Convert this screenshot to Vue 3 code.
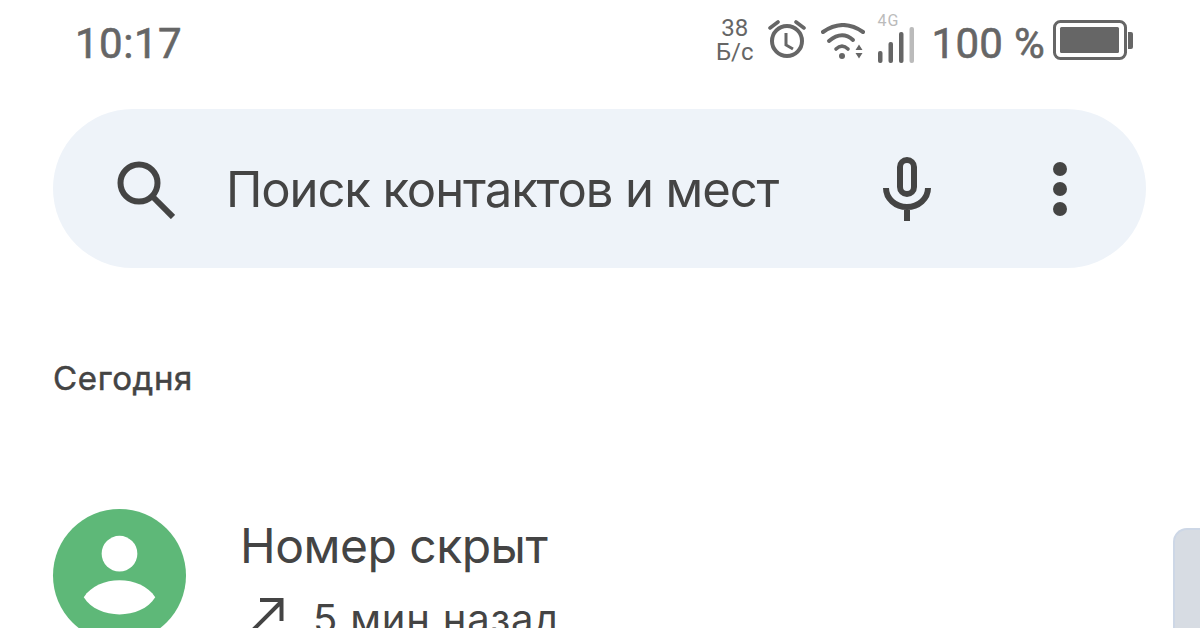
<template>
  <div class="screen">
    <header class="status-bar">
      <span class="clock">10:17</span>
      <div class="status-icons">
        <div class="speed"><span>38</span><span>Б/с</span></div>
        <svg class="ic-alarm" width="38" height="38" viewBox="0 0 38 38" fill="none" stroke="#666">
          <circle cx="19" cy="21" r="15" stroke-width="4" />
          <path d="M18 13v12l7 4" stroke-width="3" />
          <path d="M2 8l8-6M36 8l-8-6" stroke-linecap="round" stroke-width="3.600" />
        </svg>
        <svg class="ic-wifi" width="44" height="36" viewBox="0 0 44 36" fill="none" stroke="#666" stroke-linecap="round">
          <path d="M2 9Q22-5 42 9" stroke-width="4" />
          <path d="M8 18Q21 7 32 17" stroke-width="4" />
          <path d="M15 26Q21 20 27 26" stroke-width="3.600" />
          <circle cx="21" cy="33" r="3" fill="#666" stroke="none" />
          <path d="M34.500 27l3.500-5.500 3.500 5.500zM34.500 30h7l-3.500 5.500z" fill="#666" stroke="none" />
        </svg>
        <div class="signal">
          <span class="net">4G</span>
          <svg width="36" height="36" viewBox="0 0 36 36">
            <rect x="0" y="24" width="4.500" height="12" rx="2" fill="#666" />
            <rect x="10.500" y="15" width="4.500" height="21" rx="2" fill="#666" />
            <rect x="21" y="5" width="4.500" height="31" rx="2" fill="#666" />
            <rect x="31.500" y="0" width="4.500" height="36" rx="2" fill="#bbb" />
          </svg>
        </div>
        <span class="battery-text">100 %</span>
        <svg class="ic-battery" width="80" height="40" viewBox="0 0 80 40" fill="none">
          <rect x="1.500" y="1.500" width="71" height="37" rx="6" stroke="#666" stroke-width="3" />
          <rect x="7" y="7" width="59" height="26" rx="1.500" fill="#666" />
          <path d="M75 12h3a2 2 0 0 1 2 2v13a2 2 0 0 1-2 2h-3z" fill="#666" />
        </svg>
      </div>
    </header>

    <div class="search">
      <svg class="ic-search" width="58" height="58" viewBox="0 0 58 58" fill="none" stroke="#444" stroke-width="6">
        <circle cx="22" cy="22" r="18.500" />
        <path d="M35 35l21 21" />
      </svg>
      <span class="search-text">Поиск контактов и мест</span>
      <svg class="ic-mic" width="48" height="64" viewBox="0 0 48 64" fill="none" stroke="#444" stroke-width="6">
        <rect x="17" y="3" width="14" height="34" rx="7" />
        <path d="M3 31a21 19 0 0 0 42 0M24 50v14" />
      </svg>
      <div class="dots"><i></i><i></i><i></i></div>
    </div>

    <div class="section-title">Сегодня</div>

    <div class="call-row">
      <div class="avatar">
        <svg width="133" height="133" viewBox="0 0 134 134">
          <circle cx="67" cy="45" r="18" fill="#fff" />
          <path d="M31 89C45 66 89 66 103 89C89 112 45 112 31 89z" fill="#fff" />
        </svg>
      </div>
      <div class="call-info">
        <div class="call-name">Номер скрыт</div>
        <div class="call-meta">
          <svg width="36" height="38" viewBox="0 0 36 38" fill="none" stroke="#444" stroke-width="4">
            <path d="M2 36L33 5M12 3h21.500v21" />
          </svg>
          <span>5 мин назад</span>
        </div>
      </div>
    </div>

    <div class="side-tab"></div>
  </div>
</template>

<script setup>
</script>

<style>
html, body {
  margin: 0;
  background: #fff;
}
</style>

<style scoped>
.screen {
  position: relative;
  width: 1200px;
  height: 628px;
  overflow: hidden;
  background: #fff;
  font-family: Inter, Roboto, sans-serif;
  color: #444;
}

.status-bar {
  display: flex;
  justify-content: space-between;
  align-items: center;
  height: 86px;
  padding: 0 67px 0 75px;
  box-sizing: border-box;
  color: #666;
  font-family: Roboto, sans-serif;
}

.clock {
  font-size: 42px;
  letter-spacing: 0.500px;
  -webkit-text-stroke: 0.600px #666;
}

.status-icons {
  display: flex;
  align-items: center;
}

.speed {
  display: flex;
  flex-direction: column;
  align-items: center;
  font-size: 24px;
  line-height: 24px;
  margin: 0 14px 6px 0;
}

.ic-alarm {
  margin: 0 15px 8px 0;
}

.ic-wifi {
  margin: 0 13px 4px 0;
}

.signal {
  display: flex;
  flex-direction: column;
  margin: 0 18px 9px 0;
}

.net {
  font-size: 16px;
  line-height: 12px;
  letter-spacing: 1px;
  color: #bbb;
}

.battery-text {
  font-size: 42px;
  letter-spacing: 0.300px;
  -webkit-text-stroke: 0.600px #666;
  margin-right: 8px;
}

.ic-battery {
  margin-bottom: 6px;
}

.search {
  display: flex;
  align-items: center;
  margin: 23px 0 0 53px;
  width: 1093px;
  height: 159px;
  padding: 0 79px 0 64px;
  box-sizing: border-box;
  border-radius: 80px;
  background: #eef3f9;
}

.ic-search {
  margin-top: 3px;
}

.search-text {
  flex: 1;
  margin-left: 51px;
  font-size: 49px;
  font-weight: 380;
  letter-spacing: -1.100px;
  margin-top: 2px;
}

.ic-mic {
  margin-right: 122px;
}

.dots {
  display: flex;
  flex-direction: column;
  gap: 6px;
}

.dots i {
  width: 14px;
  height: 14px;
  border-radius: 50%;
  background: #444;
}

.section-title {
  margin: 91px 0 0 53px;
  font-size: 33px;
  font-weight: 420;
  line-height: 38px;
  letter-spacing: 0.650px;
  -webkit-text-stroke: 0.500px #444;
}

.call-row {
  display: flex;
  gap: 54px;
  margin: 112px 0 0 53px;
}

.avatar {
  flex: none;
  width: 133px;
  height: 133px;
  border-radius: 50%;
  background: #5eb878;
}

.avatar svg {
  display: block;
}

.call-name {
  font-size: 48px;
  font-weight: 380;
  line-height: 60px;
  letter-spacing: -0.500px;
  margin-top: 7px;
}

.call-meta {
  display: flex;
  align-items: flex-start;
  gap: 29px;
  margin: 21px 0 0 8px;
  font-size: 40px;
  font-weight: 380;
  line-height: 44px;
  letter-spacing: 0.800px;
}

.side-tab {
  position: absolute;
  right: 0;
  top: 528px;
  width: 27px;
  height: 120px;
  border-radius: 14px 0 0 0;
  background: #d7dce3;
  border: solid #cdd7e6;
  border-width: 2px 0 0 2px;
  box-sizing: border-box;
}
</style>
